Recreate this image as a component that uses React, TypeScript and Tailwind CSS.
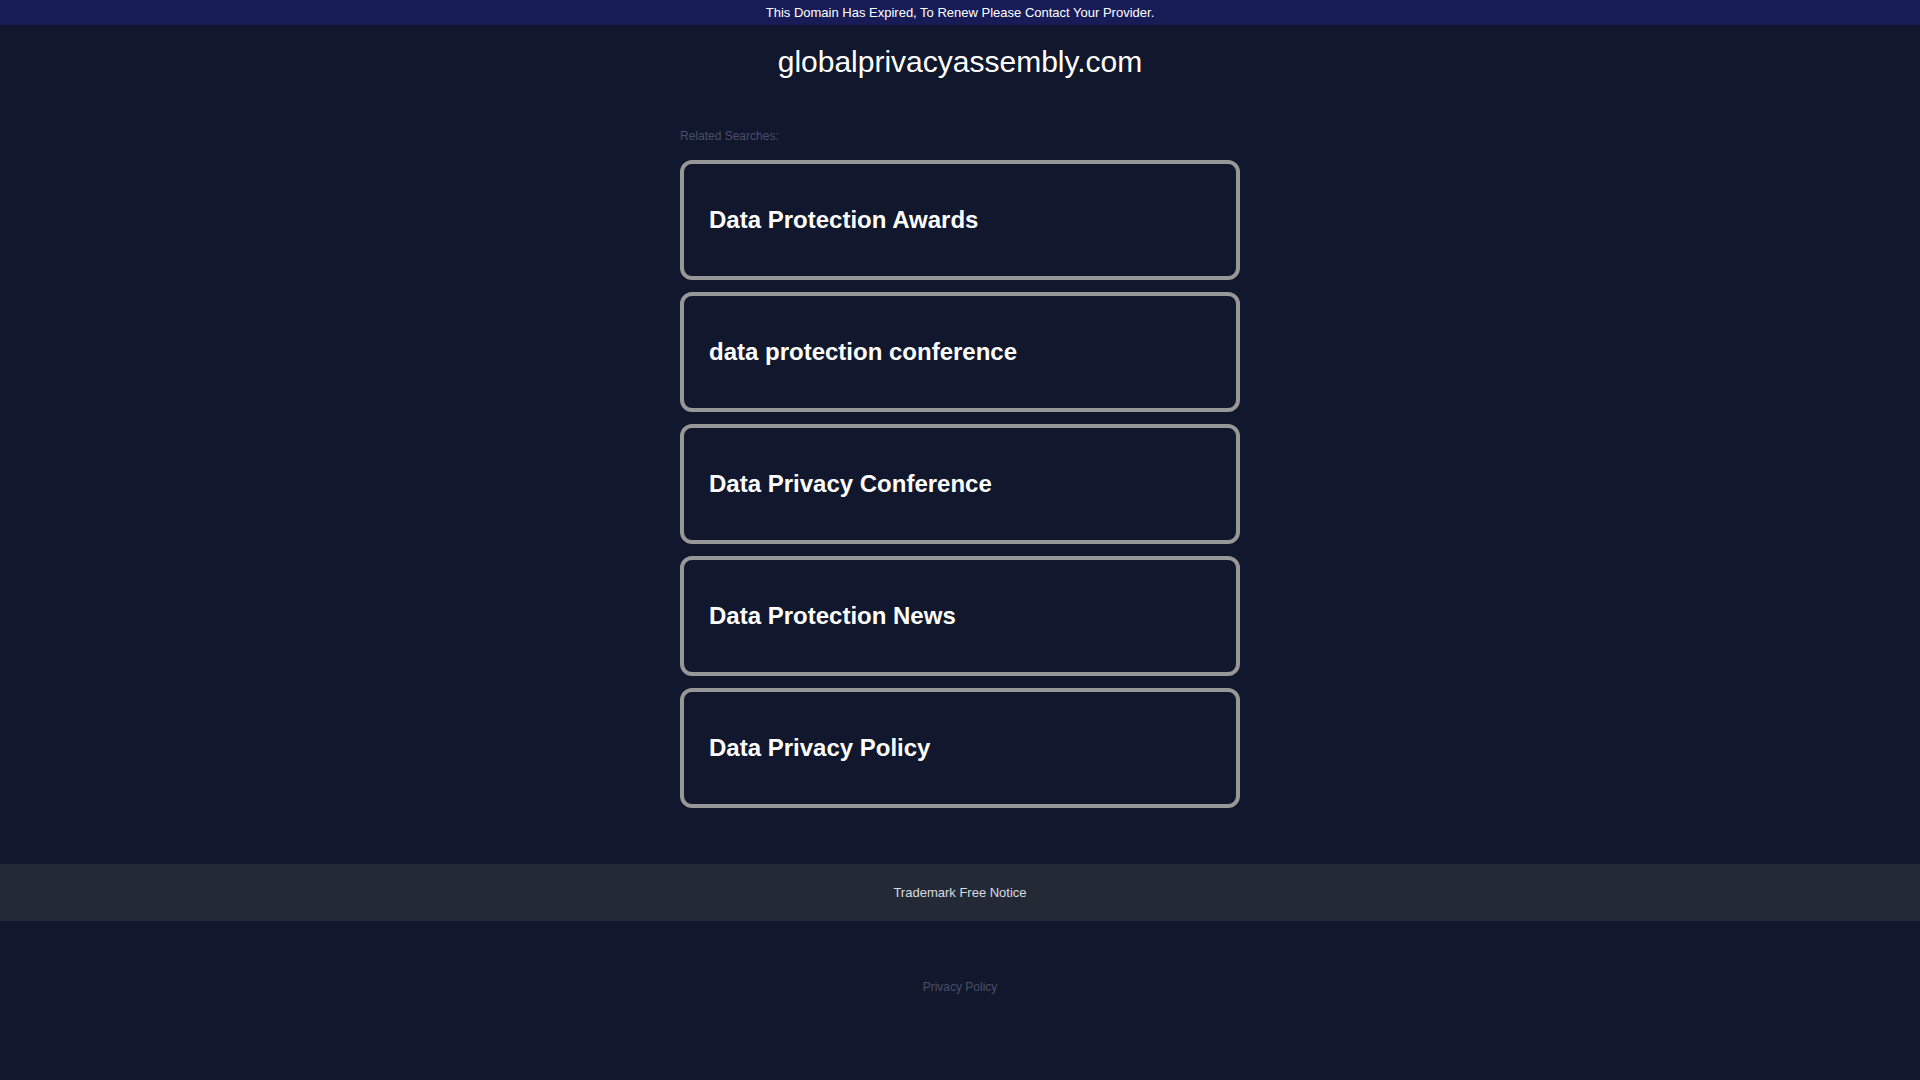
export default function App() {
  const searches = [
    "Data Protection Awards",
    "data protection conference",
    "Data Privacy Conference",
    "Data Protection News",
    "Data Privacy Policy",
  ];

  return (
    <div
      className="min-h-screen bg-[#11172c] text-white"
      style={{ fontFamily: '"Liberation Sans", Arial, sans-serif' }}
    >
      {/* expired notice */}
      <div className="flex h-[25px] items-center justify-center bg-[#171c57] text-[13px] text-white">
        This Domain Has Expired, To Renew Please Contact Your Provider.
      </div>

      <h1 className="mt-[19px] text-center text-[30px] leading-[36px] font-normal text-white">
        globalprivacyassembly.com
      </h1>

      <div className="mx-auto mt-[48px] w-[560px]">
        <p className="text-[12px] leading-[16px] text-[#4a5068]">Related Searches:</p>
        <div className="mt-[16px] flex flex-col gap-[12px]">
          {searches.map((s) => (
            <a
              key={s}
              href="#"
              className="flex h-[120px] items-center rounded-[12px] border-[4px] border-[#979797] pl-[25px] text-[24px] font-bold text-white"
            >
              {s}
            </a>
          ))}
        </div>
      </div>

      {/* footer */}
      <div className="mt-[56px] flex h-[57px] items-center justify-center bg-[#232a35] text-[13px] text-[#d8dbe0]">
        Trademark Free Notice
      </div>

      <div className="mt-[58px] pb-[60px] text-center text-[12px] leading-[16px] text-[#4a5068]">
        Privacy Policy
      </div>
    </div>
  );
}
